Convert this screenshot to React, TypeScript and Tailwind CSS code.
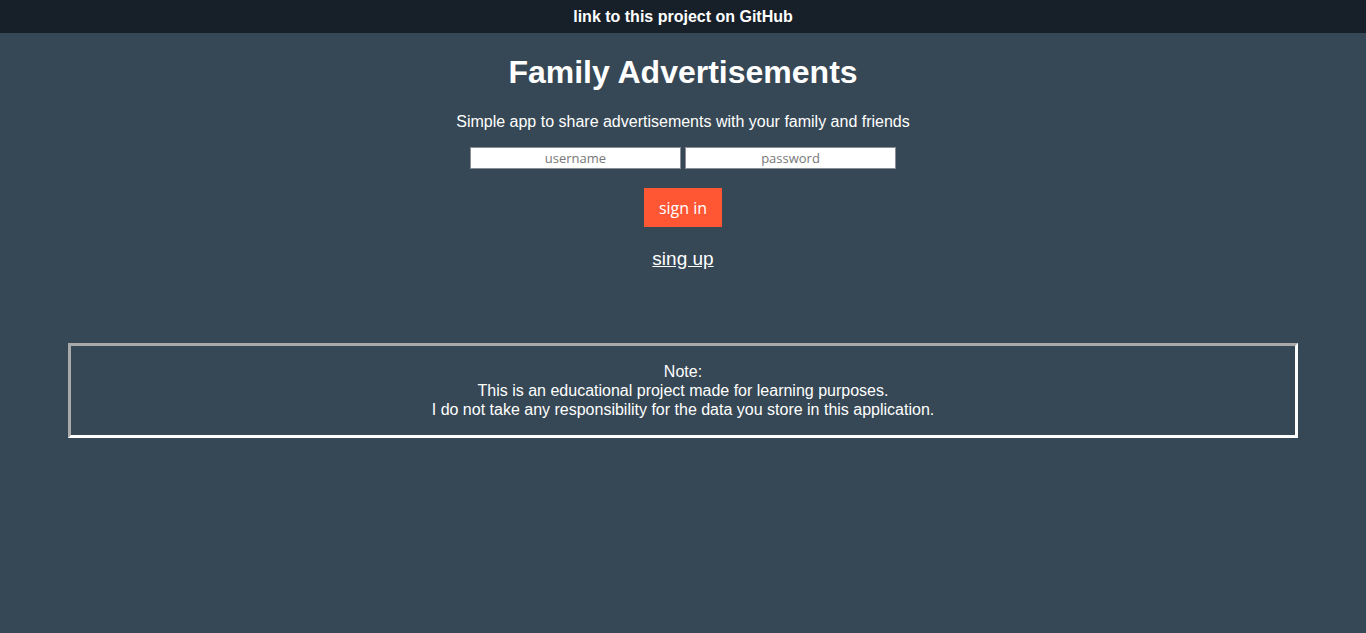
import React from 'react';

export default function App() {
  return (
    <div className="min-h-[633px] bg-[#364855] text-white font-['Liberation_Sans',Arial,sans-serif]">
      {/* Top bar */}
      <div className="h-[33px] bg-[#172029] flex items-center justify-center">
        <a href="#" className="text-[16px] font-bold text-white">link to this project on GitHub</a>
      </div>

      <div className="flex flex-col items-center">
        <h1 className="mt-[21px] text-[32px] leading-[37px] font-bold">Family Advertisements</h1>
        <p className="mt-[22px] text-[16px] leading-[18px]">Simple app to share advertisements with your family and friends</p>

        <form className="mt-[16px] flex flex-col items-center font-['Open_Sans','Noto_Sans',sans-serif]">
          <div className="flex gap-[4px]">
            <input
              type="text"
              placeholder="username"
              className="w-[211px] h-[22px] bg-white border border-[#8a8d93] text-center text-[13px] text-[#333] placeholder:text-[#777] outline-none"
            />
            <input
              type="password"
              placeholder="password"
              className="w-[211px] h-[22px] bg-white border border-[#8a8d93] text-center text-[13px] text-[#333] placeholder:text-[#777] outline-none"
            />
          </div>
          <button
            type="button"
            className="mt-[19px] w-[78px] h-[39px] bg-[#ff5733] text-white text-[16px]"
          >
            sign in
          </button>
        </form>

        <a href="#" className="mt-[21px] text-[19px] leading-[22px] text-white underline">sing up</a>
      </div>

      <div className="mt-[73px] mx-auto w-[90%] border-[3px] border-t-[#a9a9a9] border-l-[#a9a9a9] border-b-white border-r-white py-[16px] text-center text-[16px] leading-[19px]">
        <p>Note:</p>
        <p>This is an educational project made for learning purposes.</p>
        <p>I do not take any responsibility for the data you store in this application.</p>
      </div>
    </div>
  );
}
